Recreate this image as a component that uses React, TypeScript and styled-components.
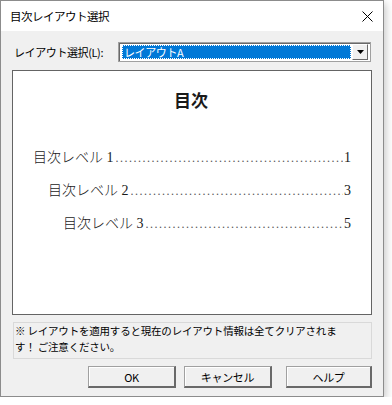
import React from "react";
import styled, { createGlobalStyle } from "styled-components";

const GlobalStyle = createGlobalStyle`
  html, body {
    margin: 0;
    padding: 0;
    background: #ffffff;
  }
  * {
    box-sizing: border-box;
  }
`;

const uiFont = `"Noto Sans CJK JP", "Liberation Sans", sans-serif`;
const docFont = `"Liberation Serif", "Noto Sans CJK JP", serif`;

const Window = styled.div`
  width: 384px;
  height: 397px;
  display: flex;
  flex-direction: column;
  background: #f0f0f0;
  border: 1px solid #8c8c8c;
  box-shadow: 2px 3px 8px rgba(0, 0, 0, 0.22);
  font-family: ${uiFont};
  color: #000;
`;

const TitleBar = styled.div`
  height: 30px;
  flex: none;
  background: #ffffff;
  display: flex;
  align-items: center;
  justify-content: space-between;
  padding: 0 10px 0 9px;
`;

const Title = styled.span`
  font-size: 11.5px;
  letter-spacing: -0.5px;
  color: #000;
`;

const CloseIcon = styled.svg`
  width: 11px;
  height: 11px;
  margin-top: 1px;
`;

const Body = styled.div`
  flex: 1;
  display: flex;
  flex-direction: column;
  padding: 11px 11px 0 11px;
`;

const ComboRow = styled.div`
  display: flex;
  align-items: center;
  height: 20px;
`;

const Label = styled.span`
  width: 106px;
  padding-left: 2px;
  font-size: 11px;
  letter-spacing: -0.4px;
`;

const Combo = styled.div`
  width: 253px;
  height: 20px;
  display: flex;
  align-items: center;
  padding: 2px;
  background: #ffffff;
  border: 1px solid #a0a0a0;
  box-shadow: inset 1px 1px 0 #696969;
`;

const Selection = styled.div`
  flex: 1;
  height: 14px;
  margin-left: 1px;
  background: #0078d7;
  display: flex;
  align-items: center;
  padding-left: 2px;
  outline: 1px dotted #ffffff;
  outline-offset: -1px;
  color: #ffffff;
  font-size: 11px;
  letter-spacing: -0.4px;
  line-height: 14px;
`;

const DropButton = styled.div`
  width: 16px;
  height: 16px;
  margin-left: 1px;
  background: #f0f0f0;
  border-top: 1px solid #ffffff;
  border-left: 1px solid #ffffff;
  border-right: 1px solid #696969;
  border-bottom: 1px solid #696969;
  display: flex;
  align-items: center;
  justify-content: center;
`;

const Preview = styled.div`
  margin-top: 8px;
  width: 360px;
  height: 245px;
  background: #ffffff;
  border: 1px solid #646464;
  display: flex;
  flex-direction: column;
  padding: 19px 20px 0 20px;
  font-family: ${docFont};
  color: #1a1a1a;
`;

const Heading = styled.div`
  text-align: center;
  font-size: 17px;
  font-weight: 700;
  line-height: 24px;
  margin-bottom: 35px;
  padding-right: 2px;
`;

const Entries = styled.div`
  display: flex;
  flex-direction: column;
  gap: 15px;
`;

const Entry = styled.div<{ $level: number }>`
  display: flex;
  align-items: baseline;
  padding-left: ${(p) => (p.$level - 1) * 15}px;
  font-size: 14px;
  line-height: 17px;
  font-weight: 300;
`;

const EntryText = styled.span`
  white-space: nowrap;
`;

const Leader = styled.span`
  flex: 1;
  overflow: hidden;
  white-space: nowrap;
  margin: 0 1px 0 2px;
  color: #555;
  font-size: 12px;
  &::after {
    content: "......................................................................................................";
    letter-spacing: 1.5px;
  }
`;

const PageNo = styled.span`
  white-space: nowrap;
`;

const Note = styled.div`
  margin: 7px 0 0 1px;
  width: 359px;
  height: 37px;
  border: 1px solid #d9d9d9;
  padding: 0 0 0 1px;
  font-size: 10.5px;
  line-height: 15.5px;
  letter-spacing: -0.2px;
`;

const NoteLine = styled.div`
  white-space: nowrap;
`;

const ButtonRow = styled.div`
  display: flex;
  justify-content: flex-end;
  margin-top: 7px;
`;

const Button = styled.button<{ $width: number; $gap: number }>`
  width: ${(p) => p.$width}px;
  height: 22px;
  margin-left: ${(p) => p.$gap}px;
  background: #f0f0f0;
  border-top: 1px solid #a0a0a0;
  border-left: 1px solid #a0a0a0;
  border-right: 2px solid #696969;
  border-bottom: 2px solid #696969;
  box-shadow: inset 1px 1px 0 #ffffff;
  font-family: ${uiFont};
  font-size: 11px;
  letter-spacing: -0.3px;
  color: #000;
  padding: 0;
  display: flex;
  align-items: center;
  justify-content: center;
`;

const entries = [
  { level: 1, text: "目次レベル 1", page: "1" },
  { level: 2, text: "目次レベル 2", page: "3" },
  { level: 3, text: "目次レベル 3", page: "5" },
];

export default function App() {
  return (
    <>
      <GlobalStyle />
      <Window>
        <TitleBar>
          <Title>目次レイアウト選択</Title>
          <CloseIcon viewBox="0 0 11 11">
            <path d="M0.5 0.5 L10.5 10.5 M10.5 0.5 L0.5 10.5" stroke="#000" strokeWidth="1" fill="none" />
          </CloseIcon>
        </TitleBar>
        <Body>
          <ComboRow>
            <Label>レイアウト選択(L):</Label>
            <Combo>
              <Selection>レイアウトA</Selection>
              <DropButton>
                <svg width="7" height="4" viewBox="0 0 7 4">
                  <path d="M0 0 H7 L3.5 4 Z" fill="#000" />
                </svg>
              </DropButton>
            </Combo>
          </ComboRow>
          <Preview>
            <Heading>目次</Heading>
            <Entries>
              {entries.map((e) => (
                <Entry key={e.level} $level={e.level}>
                  <EntryText>{e.text}</EntryText>
                  <Leader />
                  <PageNo>{e.page}</PageNo>
                </Entry>
              ))}
            </Entries>
          </Preview>
          <Note>
            <NoteLine>※ レイアウトを適用すると現在のレイアウト情報は全てクリアされま</NoteLine>
            <NoteLine>す！ ご注意ください。</NoteLine>
          </Note>
          <ButtonRow>
            <Button $width={88} $gap={0}>OK</Button>
            <Button $width={88} $gap={8}>キャンセル</Button>
            <Button $width={86} $gap={14}>ヘルプ</Button>
          </ButtonRow>
        </Body>
      </Window>
    </>
  );
}
